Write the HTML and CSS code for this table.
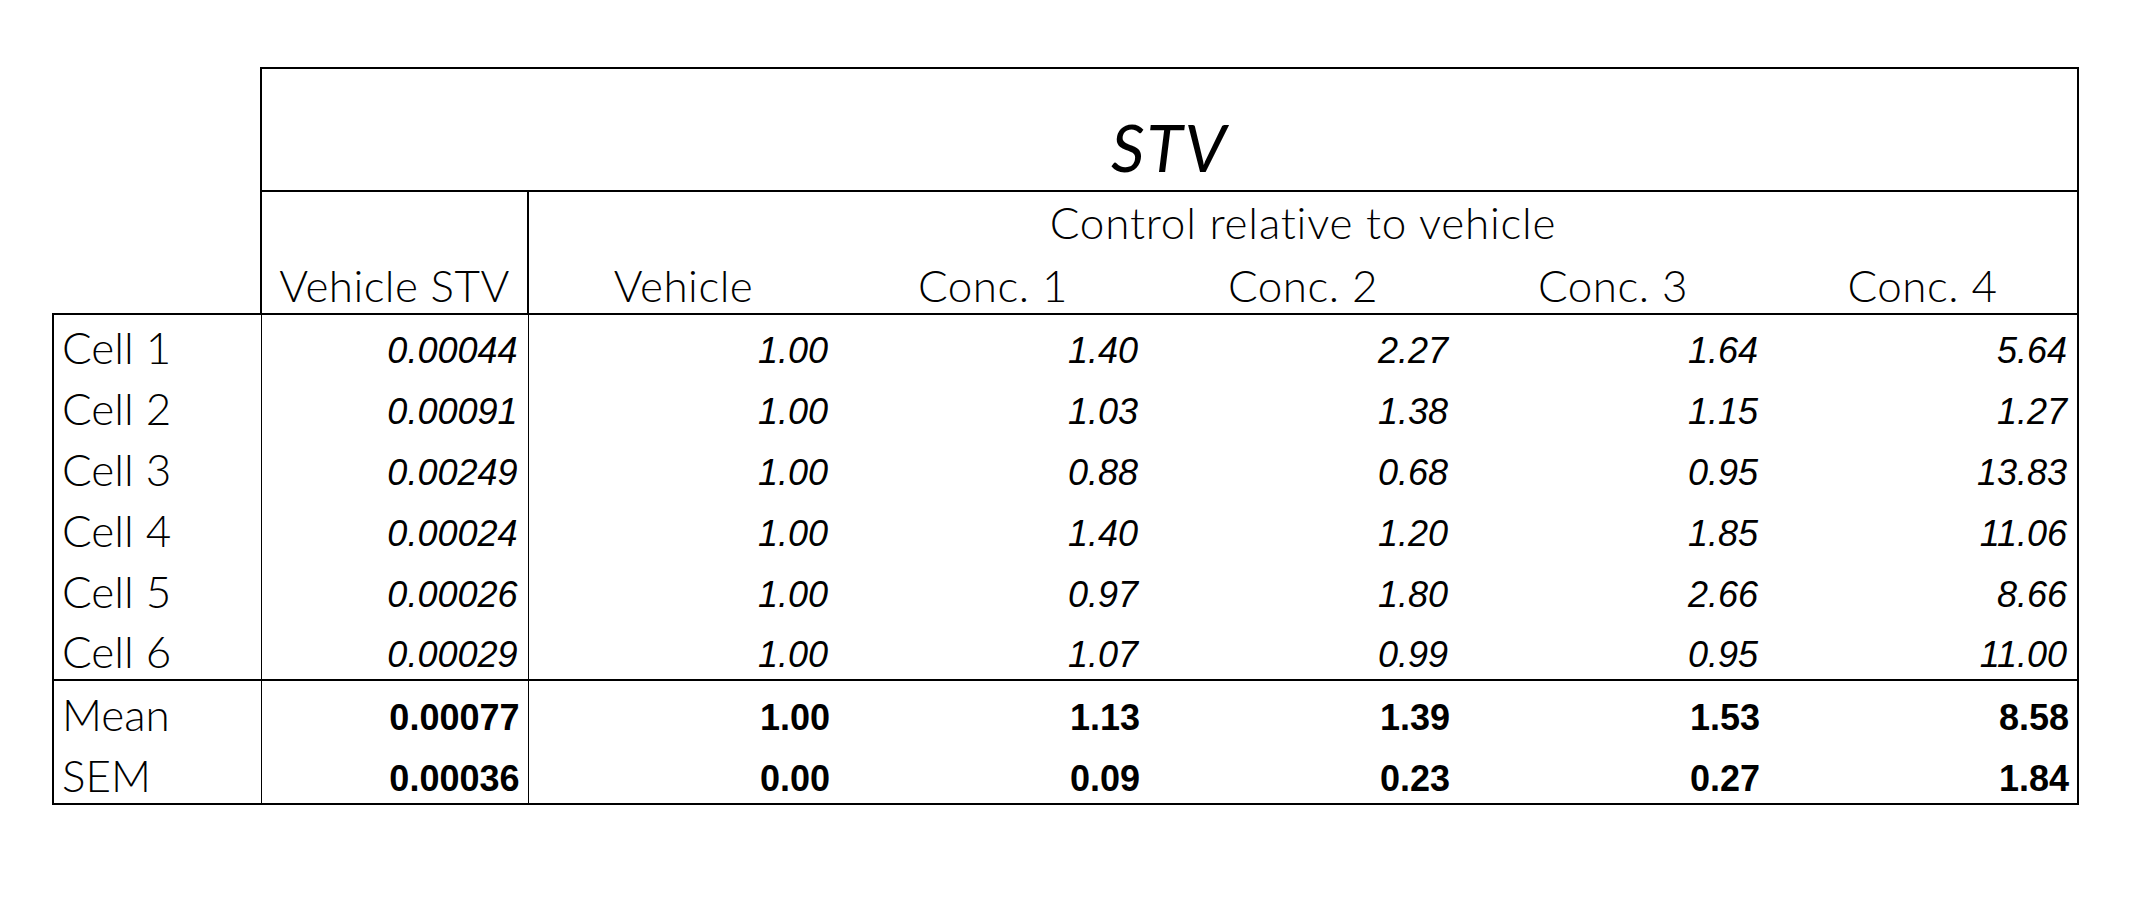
FILE: index.html
```html
<!DOCTYPE html>
<html>
<head>
<meta charset="utf-8">
<link rel="stylesheet" href="styles.css">
</head>
<body>
<table class="stv-table">
  <colgroup>
    <col class="c-label">
    <col class="c-stv">
    <col class="c-val">
    <col class="c-val">
    <col class="c-val">
    <col class="c-val">
    <col class="c-val">
  </colgroup>
  <thead>
    <tr class="r-title">
      <td class="blank"></td>
      <th class="title" colspan="6">STV</th>
    </tr>
    <tr class="r-group">
      <td class="blank"></td>
      <th class="h-stv" rowspan="2">Vehicle STV</th>
      <th class="h-group" colspan="5">Control relative to vehicle</th>
    </tr>
    <tr class="r-cols">
      <td class="blank blank-bottom"></td>
      <th class="h-col">Vehicle</th>
      <th class="h-col">Conc. 1</th>
      <th class="h-col">Conc. 2</th>
      <th class="h-col">Conc. 3</th>
      <th class="h-col h-last">Conc. 4</th>
    </tr>
  </thead>
  <tbody class="data">
    <tr><th class="lbl">Cell 1</th><td class="num v-stv">0.00044</td><td class="num">1.00</td><td class="num">1.40</td><td class="num">2.27</td><td class="num">1.64</td><td class="num last">5.64</td></tr>
    <tr><th class="lbl">Cell 2</th><td class="num v-stv">0.00091</td><td class="num">1.00</td><td class="num">1.03</td><td class="num">1.38</td><td class="num">1.15</td><td class="num last">1.27</td></tr>
    <tr><th class="lbl">Cell 3</th><td class="num v-stv">0.00249</td><td class="num">1.00</td><td class="num">0.88</td><td class="num">0.68</td><td class="num">0.95</td><td class="num last">13.83</td></tr>
    <tr><th class="lbl">Cell 4</th><td class="num v-stv">0.00024</td><td class="num">1.00</td><td class="num">1.40</td><td class="num">1.20</td><td class="num">1.85</td><td class="num last">11.06</td></tr>
    <tr><th class="lbl">Cell 5</th><td class="num v-stv">0.00026</td><td class="num">1.00</td><td class="num">0.97</td><td class="num">1.80</td><td class="num">2.66</td><td class="num last">8.66</td></tr>
    <tr><th class="lbl">Cell 6</th><td class="num v-stv">0.00029</td><td class="num">1.00</td><td class="num">1.07</td><td class="num">0.99</td><td class="num">0.95</td><td class="num last">11.00</td></tr>
  </tbody>
  <tbody class="summary">
    <tr class="r-mean"><th class="lbl">Mean</th><td class="num v-stv">0.00077</td><td class="num">1.00</td><td class="num">1.13</td><td class="num">1.39</td><td class="num">1.53</td><td class="num last">8.58</td></tr>
    <tr class="r-sem"><th class="lbl">SEM</th><td class="num v-stv">0.00036</td><td class="num">0.00</td><td class="num">0.09</td><td class="num">0.23</td><td class="num">0.27</td><td class="num last">1.84</td></tr>
  </tbody>
</table>
</body>
</html>
```

FILE: styles.css
```css
html, body {
  margin: 0;
  padding: 0;
  background: #ffffff;
}

body {
  padding: 67px 0 0 52px;
}

th, td {
  padding: 0;
  vertical-align: bottom;
  font-weight: 300;
}

.stv-table {
  border-collapse: collapse;
  table-layout: fixed;
  width: 2025px;
  color: #000;
  font-family: "Lato", "Open Sans", sans-serif;
  font-weight: 300;
}

.c-label { width: 208px; }
.c-stv { width: 267px; }
.c-val { width: 310px; }

.blank {
  border: none;
}

.blank-bottom {
  border-bottom: 2px solid #000;
}

/* title row */
.r-title { height: 123px; }
.title {
  border: 2px solid #000;
  font-size: 66px;
  font-style: italic;
  font-weight: 400;
  letter-spacing: 2px;
  line-height: 66px;
  text-align: center;
  padding-bottom: 10px;
}

.r-group { height: 60px; }
.r-cols { height: 63px; }

.h-stv {
  border-left: 2px solid #000;
  border-right: 2px solid #000;
  border-bottom: 2px solid #000;
  font-size: 44px;
  line-height: 44px;
  letter-spacing: 0.4px;
  text-align: center;
  padding-bottom: 6px;
}

.h-group {
  border-right: 2px solid #000;
  font-size: 44px;
  line-height: 44px;
  letter-spacing: 0.8px;
  text-align: center;
  padding-bottom: 7px;
}

.h-col {
  border-bottom: 2px solid #000;
  font-size: 44px;
  line-height: 44px;
  letter-spacing: 0.5px;
  text-align: center;
  padding-bottom: 6px;
}

.h-last {
  border-right: 2px solid #000;
}

/* data rows */
.data tr { height: 61px; }
.summary tr { height: 62px; }

.lbl {
  border-left: 2px solid #000;
  border-right: 1px solid #000;
  font-size: 44px;
  line-height: 44px;
  text-align: left;
  padding-left: 8px;
  padding-bottom: 6px;
}

.num {
  font-family: "Liberation Sans", Arial, sans-serif;
  font-style: italic;
  font-size: 36px;
  line-height: 36px;
  text-align: right;
  padding-right: 10px;
  padding-bottom: 6px;
}

.v-stv {
  border-right: 1px solid #000;
}

.last {
  border-right: 2px solid #000;
}

.summary .num {
  font-style: normal;
  font-weight: 700;
  padding-right: 8px;
}

.r-mean .lbl,
.r-mean .num {
  border-top: 2px solid #000;
}

.r-sem .lbl,
.r-sem .num {
  border-bottom: 2px solid #000;
}
```
